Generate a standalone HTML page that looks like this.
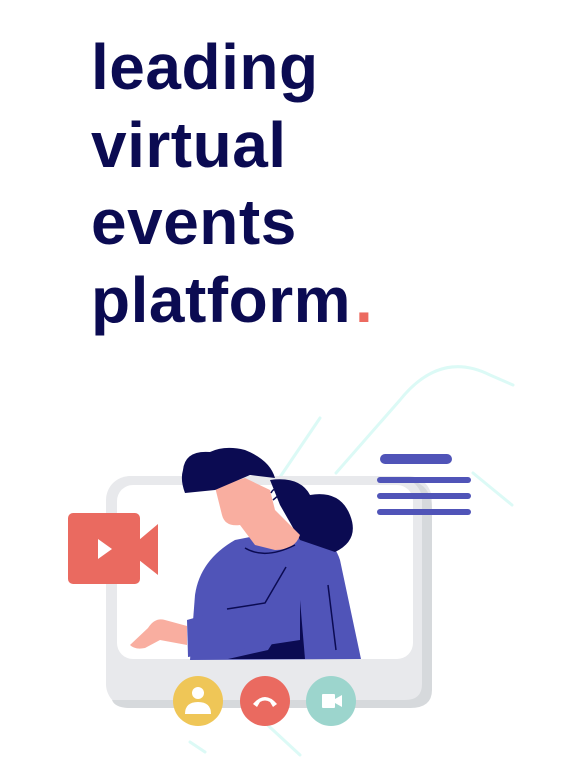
<!DOCTYPE html>
<html><head><meta charset="utf-8"><style>
html,body{margin:0;padding:0;background:#fff;width:562px;height:778px;overflow:hidden}
.t{position:absolute;left:91px;top:29px;font-family:"Liberation Sans",sans-serif;font-weight:bold;font-size:64px;line-height:77.5px;color:#0b0b52;letter-spacing:0.5px}
.t span{color:#ec6a60;margin-left:4px}
svg{position:absolute;left:0;top:0}
</style></head><body>
<svg width="562" height="778" viewBox="0 0 562 778">
 <g stroke="#dcfaf6" stroke-width="3" fill="none" stroke-linecap="round">
  <path d="M336 473 L400 400 Q440 350 490 375 L513 385"/>
  <path d="M278 480 L320 418"/>
  <path d="M473 473 L512 505"/>
  <path d="M190 742 L205 752"/>
  <path d="M260 718 L300 755"/>
 </g>
 <rect x="106" y="476" width="326" height="232" rx="24" fill="#e8e9ec"/>
 <path d="M410 480 Q432 485 432 510 V690 Q432 708 410 708 H130 Q115 708 112 700 H405 Q422 700 422 684 V500 Q422 488 410 480Z" fill="#d6d9dc"/>
 <rect x="117" y="485" width="296" height="174" rx="16" fill="#fff"/>
 <!-- person -->
 <path d="M190 660 L195 595 Q200 560 235 540 L295 528 Q330 530 340 560 L361 659Z" fill="#5054b8"/>
 <path d="M228 659 L268 650 L300 600 L305 659Z" fill="#0b0b52"/>
 <path d="M187 620 L240 605 L300 600 L300 640 L188 657Z" fill="#5054b8"/>
 <path d="M227 609 L265 603 L286 567" stroke="#0b0b52" stroke-width="1.5" fill="none"/>
 <path d="M328 585 L336 650" stroke="#0b0b52" stroke-width="1.5" fill="none"/>
 <path d="M187 626 L165 620 Q155 617 148 628 L130 645 Q135 650 145 648 L160 640 L187 645Z" fill="#f9aea0"/>
 <path d="M270 480 Q300 476 310 495 Q340 490 350 515 Q360 540 335 552 L300 540 L280 505Z" fill="#0b0b52"/>
 <path d="M215 487 L245 478 L270 490 L275 510 L300 535 Q295 550 275 550 L255 545 L240 525 Q225 527 222 515 Z" fill="#f9aea0"/>
 <path d="M183 470 Q185 450 210 452 Q225 445 245 450 Q270 460 275 478 L250 475 L215 490 L185 493 Q180 480 183 470Z" fill="#0b0b52"/>
 <path d="M245 548 Q265 560 295 545" stroke="#0b0b52" stroke-width="1.5" fill="none"/>
 <path d="M271 493 Q275 485 279 495 L273 500" stroke="#0b0b52" stroke-width="1.5" fill="none"/>
 <!-- camera icon -->
 <rect x="68" y="513" width="72" height="71" rx="5" fill="#ea6a60"/>
 <path d="M139 540 L158 524 V575 L139 560Z" fill="#ea6a60"/>
 <path d="M98 539 L112 549 L98 559Z" fill="#fff"/>
 <!-- text lines -->
 <g stroke="#5054b8" stroke-linecap="round">
  <path d="M385 459 H447" stroke-width="10"/>
  <path d="M380 480 H468" stroke-width="6"/>
  <path d="M380 496 H468" stroke-width="6"/>
  <path d="M380 512 H468" stroke-width="6"/>
 </g>
 <!-- buttons -->
 <circle cx="198" cy="701" r="25" fill="#efc657"/>
 <circle cx="198" cy="693" r="6" fill="#fff"/>
 <path d="M185 714 Q185 702 198 702 Q211 702 211 714Z" fill="#fff"/>
 <circle cx="265" cy="701" r="25" fill="#ea6a60"/>
 <path d="M253 704 Q265 690 277 704 L273 707 L270 702 Q265 699 260 702 L257 707Z" fill="#fff"/>
 <circle cx="331" cy="701" r="25" fill="#9cd5cd"/>
 <rect x="322" y="694" width="13" height="14" rx="1" fill="#fff"/>
 <path d="M335 699 L342 695 V707 L335 703Z" fill="#fff"/>
</svg>
<div class="t">leading<br>virtual<br>events<br>platform<span>.</span></div>
</body></html>
